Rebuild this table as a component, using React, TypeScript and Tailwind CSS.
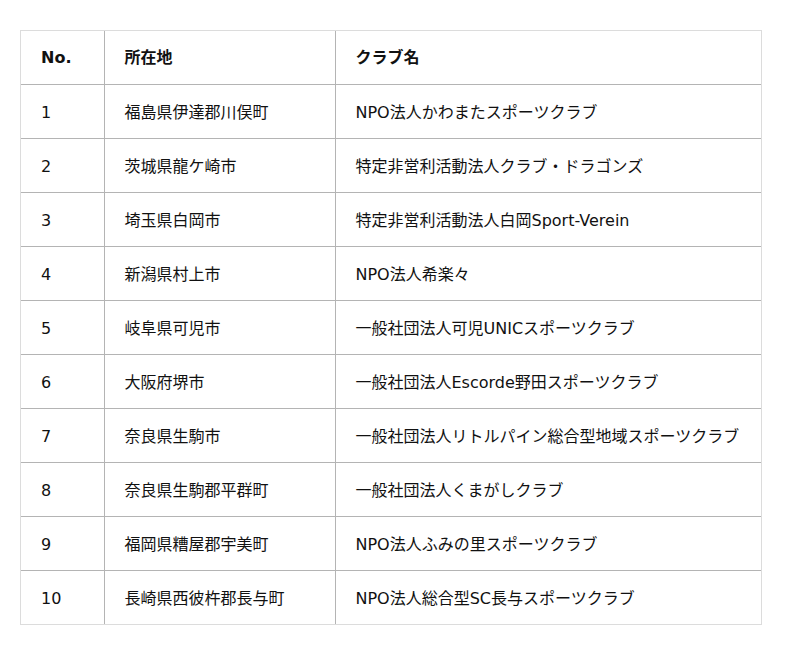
const clubs = [
  { no: '1', area: '福島県伊達郡川俣町', name: 'NPO法人かわまたスポーツクラブ' },
  { no: '2', area: '茨城県龍ケ崎市', name: '特定非営利活動法人クラブ・ドラゴンズ' },
  { no: '3', area: '埼玉県白岡市', name: '特定非営利活動法人白岡Sport-Verein' },
  { no: '4', area: '新潟県村上市', name: 'NPO法人希楽々' },
  { no: '5', area: '岐阜県可児市', name: '一般社団法人可児UNICスポーツクラブ' },
  { no: '6', area: '大阪府堺市', name: '一般社団法人Escorde野田スポーツクラブ' },
  { no: '7', area: '奈良県生駒市', name: '一般社団法人リトルパイン総合型地域スポーツクラブ' },
  { no: '8', area: '奈良県生駒郡平群町', name: '一般社団法人くまがしクラブ' },
  { no: '9', area: '福岡県糟屋郡宇美町', name: 'NPO法人ふみの里スポーツクラブ' },
  { no: '10', area: '長崎県西彼杵郡長与町', name: 'NPO法人総合型SC長与スポーツクラブ' },
];

export default function App() {
  return (
    <div className="min-h-[655px] bg-white px-5 pt-[30px] text-[16px] text-[#111] [font-family:'DejaVu_Sans','Noto_Sans_CJK_JP',sans-serif]">
      <div className="w-[742px] border border-[#dcdcdc]">
        <table className="w-full table-fixed border-collapse">
          <colgroup>
            <col className="w-[83px]" />
            <col className="w-[231px]" />
            <col />
          </colgroup>
          <thead>
            <tr className="h-[53px]">
              <th className="pl-5 pt-[2px] text-left font-bold">No.</th>
              <th className="border-l border-[#b4b4b4] pl-5 pt-[2px] text-left font-bold">所在地</th>
              <th className="border-l border-[#b4b4b4] pl-5 pt-[2px] text-left font-bold">クラブ名</th>
            </tr>
          </thead>
          <tbody>
            {clubs.map((club) => (
              <tr key={club.no} className="h-[54px] border-t border-[#b4b4b4]">
                <td className="pl-5 pt-1">{club.no}</td>
                <td className="border-l border-[#b4b4b4] pl-5 pt-1">{club.area}</td>
                <td className="whitespace-nowrap border-l border-[#b4b4b4] pl-5 pt-1">{club.name}</td>
              </tr>
            ))}
          </tbody>
        </table>
      </div>
    </div>
  );
}
